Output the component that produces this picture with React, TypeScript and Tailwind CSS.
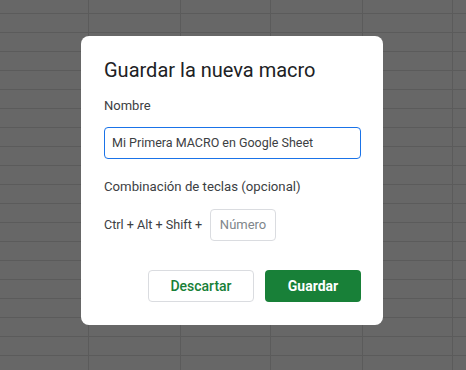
import React from "react";

const COLS = [89, 92, 90, 92, 90, 90];

export default function App() {
  const rows = Array.from({ length: 20 });
  return (
    <div className="relative w-[466px] h-[370px] overflow-hidden bg-[#676767]" style={{ fontFamily: "Roboto, 'Liberation Sans', sans-serif" }}>
      {/* spreadsheet grid under scrim */}
      <div className="flex flex-col">
        <div className="h-[14px] flex border-b border-[#5b5b5b]">
          {COLS.map((w, i) => (
            <div key={i} className="h-full border-r border-[#5b5b5b] shrink-0" style={{ width: w }} />
          ))}
        </div>
        {rows.map((_, r) => (
          <div key={r} className="h-[19px] flex border-b border-[#5b5b5b]">
            {COLS.map((w, i) => (
              <div key={i} className="h-full border-r border-[#5b5b5b] shrink-0" style={{ width: w }} />
            ))}
          </div>
        ))}
      </div>

      {/* dialog */}
      <div className="absolute left-[81px] top-[36px] w-[302px] h-[289px] bg-white rounded-[8px] pt-[20px] pl-[23px] pr-[22px] flex flex-col">
        <div className="text-[20px] leading-[28px] text-[#202124]">Guardar la nueva macro</div>
        <div className="mt-[12px] text-[13px] leading-[20px] text-[#3c4043]">Nombre</div>
        <div className="mt-[11px] h-[32px] w-[257px] border border-[#1a73e8] rounded-[4px] flex items-center px-[7px] text-[12.5px] text-[#3c4043]">
          Mi Primera MACRO en Google Sheet
        </div>
        <div className="mt-[18px] text-[13.2px] leading-[20px] text-[#3c4043]">Combinación de teclas (opcional)</div>
        <div className="mt-[12px] flex items-center gap-[8px] text-[12.6px] text-[#3c4043]">
          <span>Ctrl + Alt + Shift +</span>
          <div className="h-[32px] w-[66px] border border-[#dadce0] rounded-[4px] flex items-center justify-center text-[13px] text-[#80868b]">
            Número
          </div>
        </div>
        <div className="mt-[29px] flex justify-end gap-[11px]">
          <div className="h-[32px] w-[106px] border border-[#dadce0] rounded-[4px] flex items-center justify-center text-[14px] font-medium text-[#188038]">
            Descartar
          </div>
          <div className="h-[32px] w-[96px] bg-[#188038] rounded-[4px] flex items-center justify-center text-[14px] font-bold text-white">
            Guardar
          </div>
        </div>
      </div>
    </div>
  );
}
